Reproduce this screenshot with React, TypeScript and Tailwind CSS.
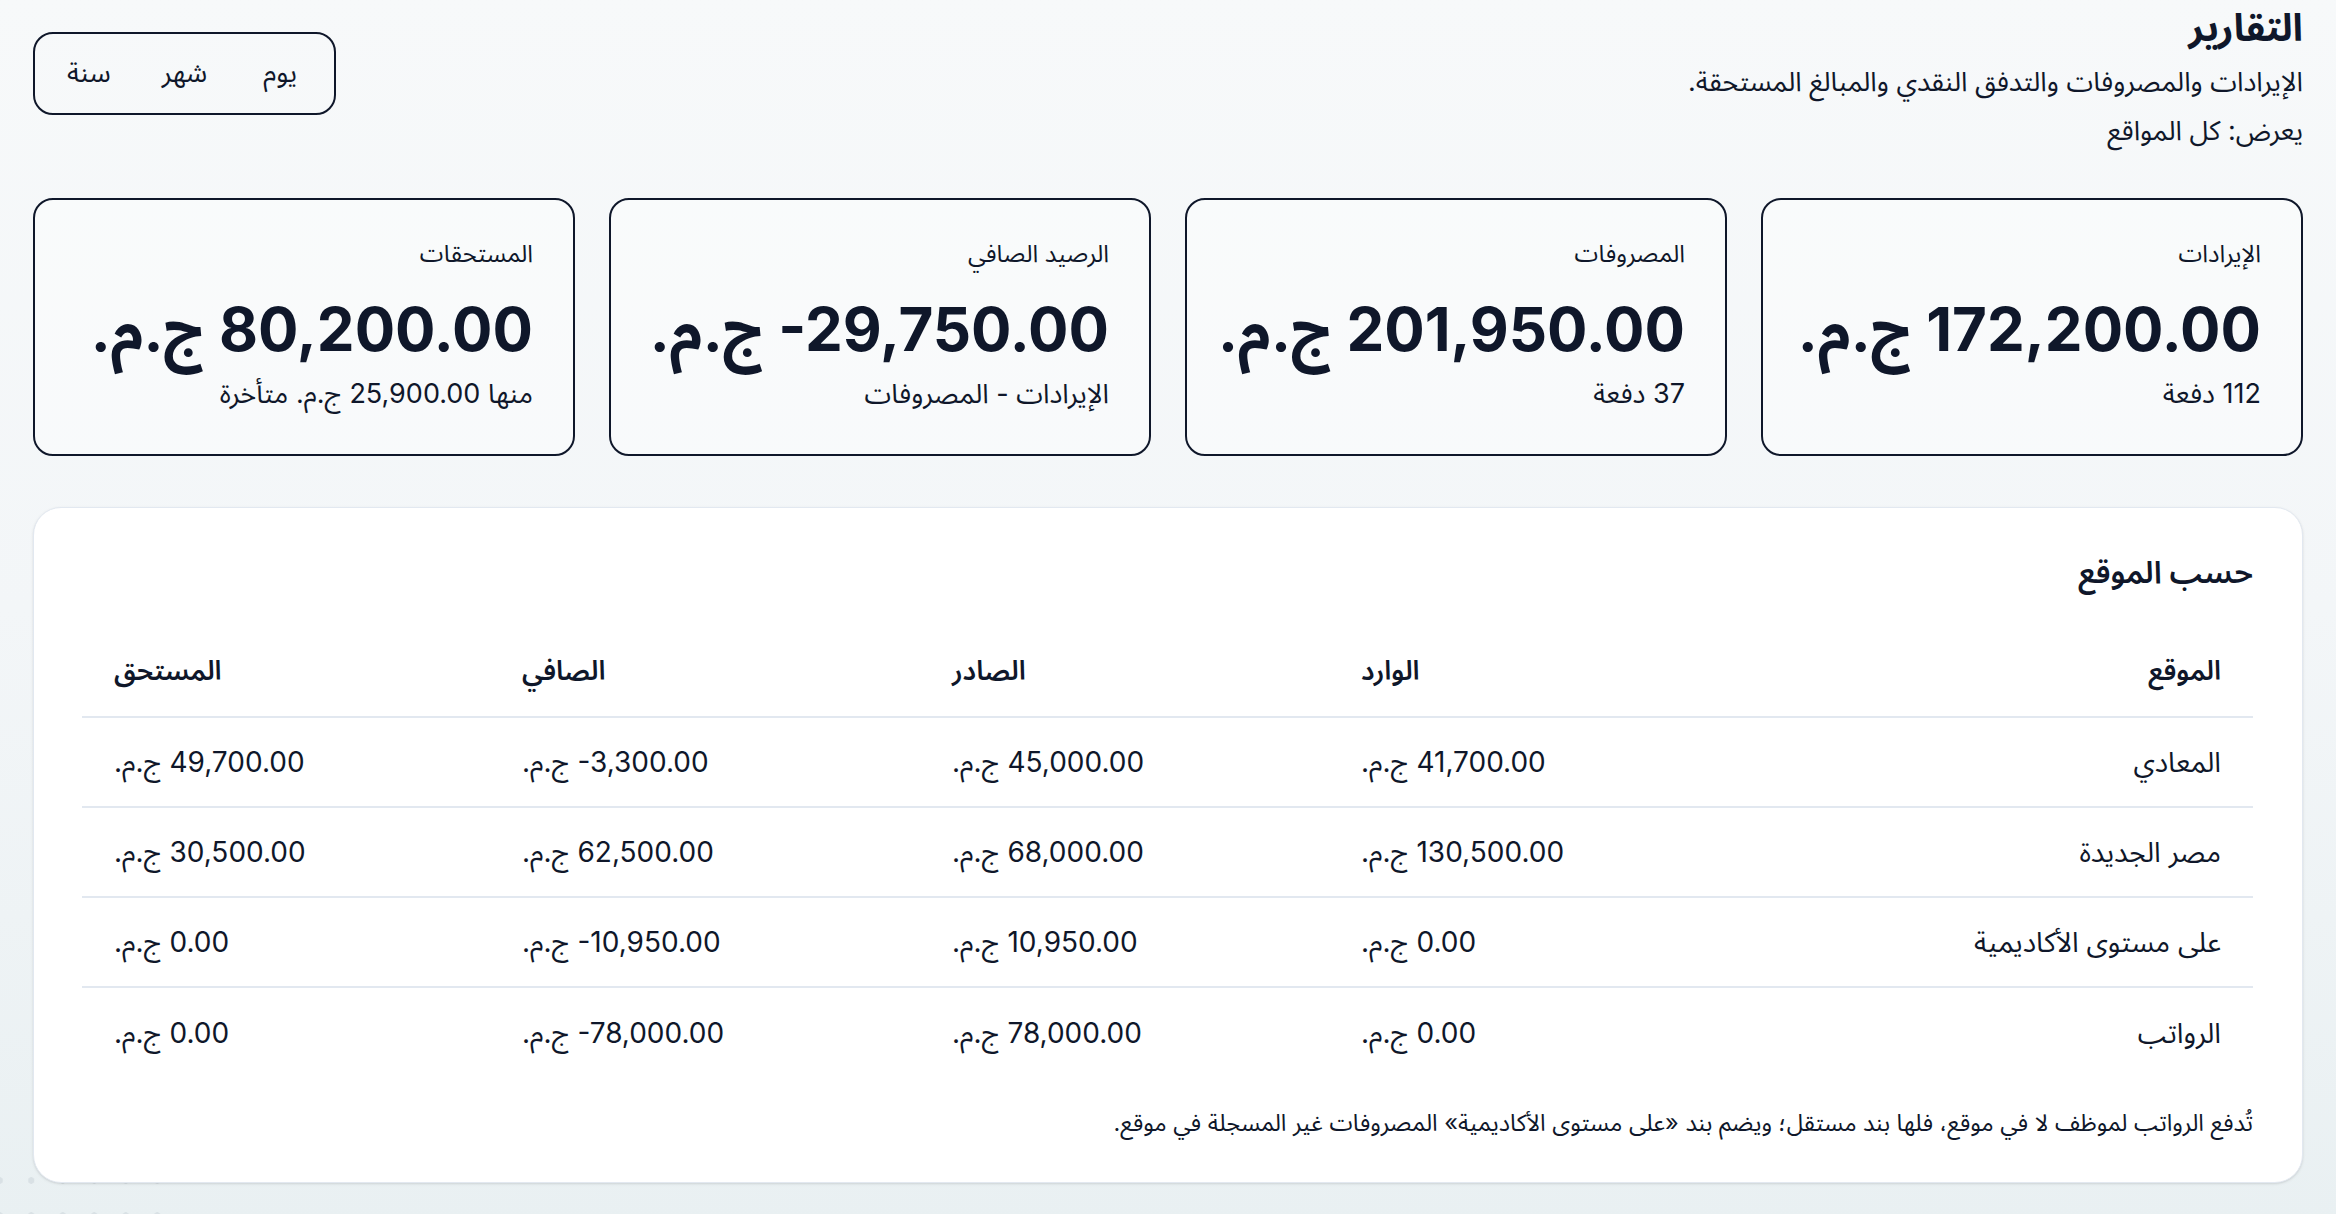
import React from 'react';

interface Card {
  label: string;
  value: string;
  sub: string;
}

const cards: Card[] = [
  { label: 'الإيرادات', value: '172,200.00 ج.م.', sub: '112 دفعة' },
  { label: 'المصروفات', value: '201,950.00 ج.م.', sub: '37 دفعة' },
  { label: 'الرصيد الصافي', value: '\u200E-29,750.00 ج.م.', sub: 'الإيرادات - المصروفات' },
  { label: 'المستحقات', value: '80,200.00 ج.م.', sub: 'منها 25,900.00 ج.م. متأخرة' },
];

const rows = [
  ['المعادي', '41,700.00 ج.م.', '45,000.00 ج.م.', '\u200E-3,300.00 ج.م.', '49,700.00 ج.م.'],
  ['مصر الجديدة', '130,500.00 ج.م.', '68,000.00 ج.م.', '62,500.00 ج.م.', '30,500.00 ج.م.'],
  ['على مستوى الأكاديمية', '0.00 ج.م.', '10,950.00 ج.م.', '\u200E-10,950.00 ج.م.', '0.00 ج.م.'],
  ['الرواتب', '0.00 ج.م.', '78,000.00 ج.م.', '\u200E-78,000.00 ج.م.', '0.00 ج.م.'],
];

const headers = ['الموقع', 'الوارد', 'الصادر', 'الصافي', 'المستحق'];

export default function App() {
  return (
    <div
      dir="rtl"
      className="relative min-h-screen overflow-hidden bg-gradient-to-b from-[#f7f9fa] via-[#f3f6f8] to-[#e9f0f2] font-['Inter','Noto_Sans_Arabic','Noto_Sans','DejaVu_Sans',sans-serif] text-[#0f172a]"
    >
      {/* dotted decoration bottom-left */}
      <div className="pointer-events-none absolute bottom-0 left-0 h-[60px] w-[175px] bg-[radial-gradient(circle,#d9e1e5_3px,transparent_3.5px)] bg-[size:31.5px_35px] bg-[position:-16px_0px]" />

      <div className="relative z-10 px-[33px] pt-[6px] pb-10">
        {/* header */}
        <div className="flex items-start justify-between">
          <div>
            <h1 className="text-[38px] font-bold leading-[42px]">التقارير</h1>
            <p className="mt-[16px] text-[27px] leading-[36px]">
              الإيرادات والمصروفات والتدفق النقدي والمبالغ المستحقة.
            </p>
            <p className="mt-[13px] text-[27px] leading-[36px]">يعرض: كل المواقع</p>
          </div>
          <div className="mt-[26px] flex h-[83px] w-[303px] items-center justify-center rounded-[20px] border-2 border-[#0f172a] px-[6px]">
            {['يوم', 'شهر', 'سنة'].map((t) => (
              <button key={t} className="flex h-full w-[96px] items-center justify-center text-[27px]">
                {t}
              </button>
            ))}
          </div>
        </div>

        {/* summary cards */}
        <div className="mt-[49px] grid grid-cols-4 gap-[34px]">
          {cards.map((c) => (
            <div
              key={c.label}
              className="h-[258px] rounded-[20px] border-2 border-[#0f172a] bg-white/40 px-10 pt-[38px]"
            >
              <div className="text-[24px] leading-[32px]">{c.label}</div>
              <div className="mt-[23px] whitespace-nowrap text-[60px] font-bold leading-[72px]">{c.value}</div>
              <div className="mt-[12px] text-[27px] leading-[34px]">{c.sub}</div>
            </div>
          ))}
        </div>

        {/* by location */}
        <div className="mt-[51px] rounded-[28px] border border-[#e2e8f0] bg-white px-[49px] pt-[44px] pb-[43px] shadow-sm">
          <h2 className="text-[31px] font-semibold leading-[40px]">حسب الموقع</h2>
          <table className="mt-[35px] w-full table-fixed border-collapse">
            <colgroup>
              <col className="w-[515px]" />
              <col className="w-[409px]" />
              <col className="w-[409px]" />
              <col className="w-[430px]" />
              <col className="w-[408px]" />
            </colgroup>
            <thead>
              <tr className="h-[90px] border-b-2 border-[#e2e8f0]">
                {headers.map((h, i) => (
                  <th
                    key={h}
                    className={`px-8 text-[27px] font-semibold ${i === 0 ? 'text-right' : 'text-left'}`}
                  >
                    {h}
                  </th>
                ))}
              </tr>
            </thead>
            <tbody>
              {rows.map((r, ri) => (
                <tr
                  key={r[0]}
                  className={`h-[90px] ${ri < rows.length - 1 ? 'border-b-2 border-[#e2e8f0]' : ''}`}
                >
                  {r.map((cell, i) => (
                    <td
                      key={i}
                      className={`px-8 text-[28px] whitespace-nowrap ${i === 0 ? 'text-right' : 'text-left'}`}
                    >
                      {cell}
                    </td>
                  ))}
                </tr>
              ))}
            </tbody>
          </table>
          <p className="mt-[30px] text-[23.5px] leading-[32px]">
            تُدفع الرواتب لموظف لا في موقع، فلها بند مستقل؛ ويضم بند «على مستوى الأكاديمية» المصروفات غير المسجلة في موقع.
          </p>
        </div>
      </div>
    </div>
  );
}
